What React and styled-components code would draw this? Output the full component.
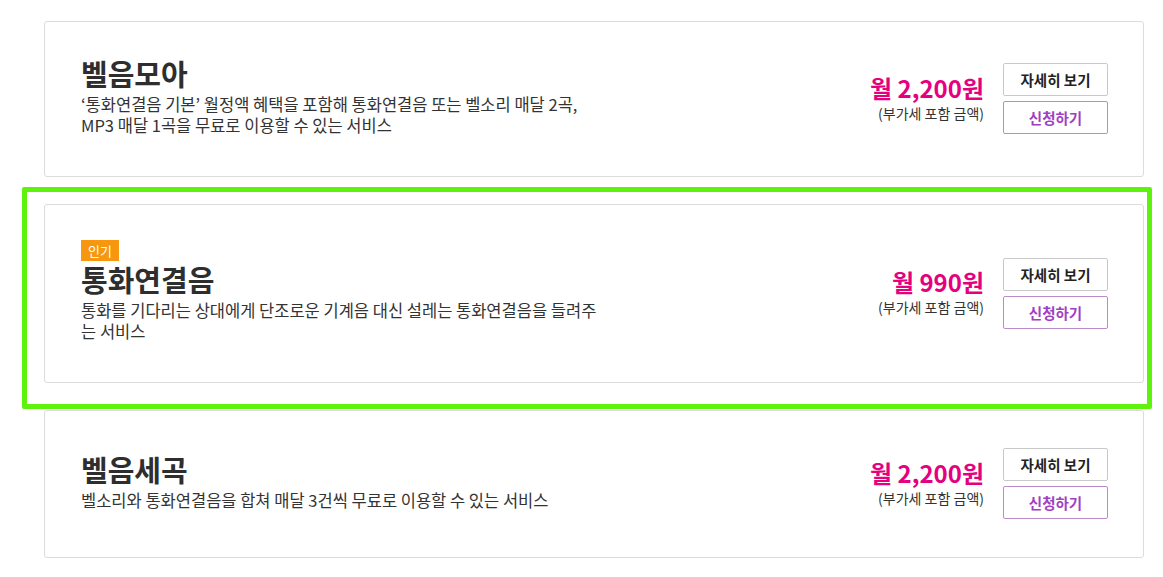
import React from 'react';
import styled, { createGlobalStyle } from 'styled-components';

const GlobalStyle = createGlobalStyle`
	* {
		box-sizing: border-box;
	}
	body {
		margin: 0;
		background: #fff;
		font-family: 'Noto Sans CJK KR', 'Noto Sans', sans-serif;
		color: #333;
	}
`;

const Page = styled.div`
	display: flex;
	flex-direction: column;
	gap: 27px;
	width: 1100px;
	padding: 21px 0 0 44px;
	box-sizing: content-box;
`;

const Card = styled.div`
	position: relative;
	display: flex;
	align-items: center;
	justify-content: space-between;
	background: #fff;
	border: 1px solid #dcdcdc;
	border-radius: 3px;
	padding: 37px 35px 38px 36px;
`;

const Highlight = styled.div`
	position: absolute;
	top: -18px;
	bottom: -27px;
	left: -23px;
	right: -9px;
	border: 5px solid #5ff20f;
	border-radius: 2px;
	pointer-events: none;
`;

const Info = styled.div`
	width: 530px;
	margin: -2px 0 2px;
`;

const Badge = styled.span`
	display: table;
	background: #f7960f;
	color: #fff;
	font-size: 13px;
	line-height: 21px;
	padding: 0 7px;
	margin-bottom: 2px;
`;

const Title = styled.h3`
	margin: 0 0 5px;
	font-size: 29px;
	font-weight: 700;
	line-height: 32px;
	color: #2e2e2e;
`;

const Desc = styled.p`
	margin: 0;
	font-size: 16.5px;
	line-height: 21px;
	color: #333;
`;

const Side = styled.div`
	display: flex;
	align-items: center;
	gap: 19px;
`;

const Price = styled.div`
	text-align: right;
	margin-top: -4px;
`;

const Amount = styled.div`
	font-size: 24px;
	font-weight: 700;
	line-height: 32px;
	color: #e5007f;
`;

const VatNote = styled.div`
	font-size: 14px;
	line-height: 18px;
	color: #333;
`;

const Buttons = styled.div`
	display: flex;
	flex-direction: column;
	gap: 5px;
`;

const Button = styled.button`
	width: 105px;
	height: 33px;
	background: #fff;
	border: 1px solid ${({ $apply }) => ($apply ? '#b98bcf' : '#c9c9c9')};
	border-radius: 2px;
	color: ${({ $apply }) => ($apply ? '#a13fc4' : '#222')};
	font-family: inherit;
	font-size: 14.5px;
	font-weight: 700;
	padding: 0;
	cursor: pointer;
`;

const services = [
	{
		name: '벨음모아',
		desc: '‘통화연결음 기본’ 월정액 혜택을 포함해 통화연결음 또는 벨소리 매달 2곡, MP3 매달 1곡을 무료로 이용할 수 있는 서비스',
		price: '월 2,200원',
	},
	{
		name: '통화연결음',
		badge: '인기',
		highlight: true,
		desc: '통화를 기다리는 상대에게 단조로운 기계음 대신 설레는 통화연결음을 들려주는 서비스',
		price: '월 990원',
	},
	{
		name: '벨음세곡',
		desc: '벨소리와 통화연결음을 합쳐 매달 3건씩 무료로 이용할 수 있는 서비스',
		price: '월 2,200원',
	},
];

export default function App() {
	return (
		<>
			<GlobalStyle />
			<Page>
				{services.map((s) => (
					<Card key={s.name}>
						<Info>
							{s.badge && <Badge>{s.badge}</Badge>}
							<Title>{s.name}</Title>
							<Desc>{s.desc}</Desc>
						</Info>
						<Side>
							<Price>
								<Amount>{s.price}</Amount>
								<VatNote>(부가세 포함 금액)</VatNote>
							</Price>
							<Buttons>
								<Button>자세히 보기</Button>
								<Button $apply>신청하기</Button>
							</Buttons>
						</Side>
						{s.highlight && <Highlight />}
					</Card>
				))}
			</Page>
		</>
	);
}
